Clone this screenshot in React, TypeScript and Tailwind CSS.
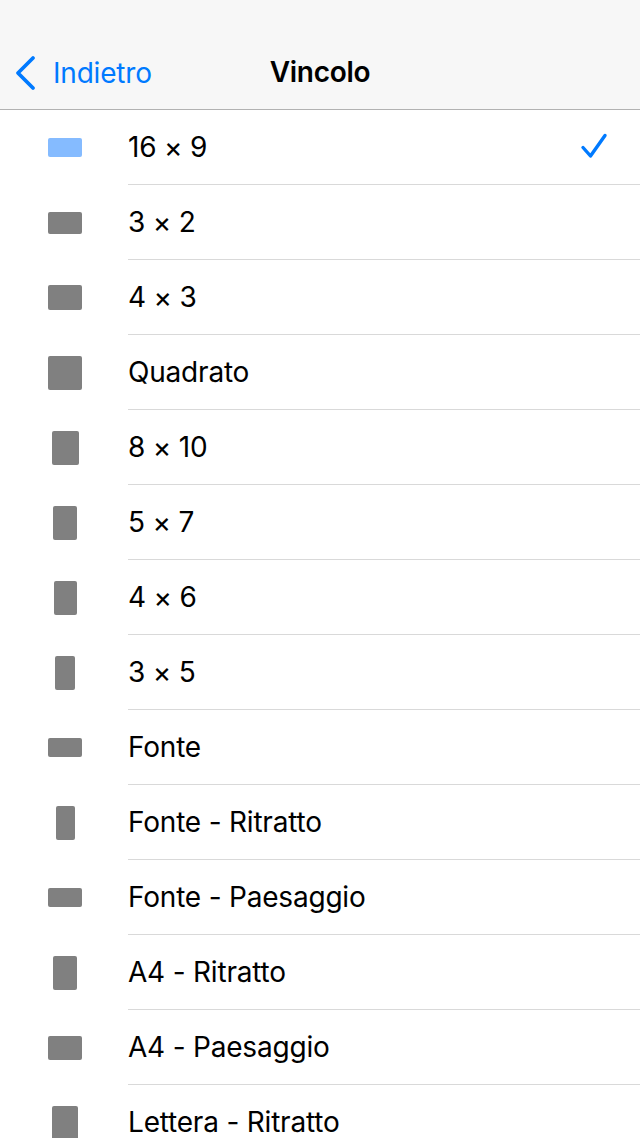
type Ratio = {
  label: string;
  size: string; // full tailwind classes for the shape
  selected?: boolean;
};

const ratios: Ratio[] = [
  { label: "16 × 9", size: "w-[34px] h-[19px]", selected: true },
  { label: "3 × 2", size: "w-[34px] h-[22px]" },
  { label: "4 × 3", size: "w-[34px] h-[25px]" },
  { label: "Quadrato", size: "w-[34px] h-[34px]" },
  { label: "8 × 10", size: "w-[27px] h-[34px]" },
  { label: "5 × 7", size: "w-[24px] h-[34px]" },
  { label: "4 × 6", size: "w-[23px] h-[34px]" },
  { label: "3 × 5", size: "w-[20px] h-[34px]" },
  { label: "Fonte", size: "w-[34px] h-[19px]" },
  { label: "Fonte - Ritratto", size: "w-[19px] h-[34px]" },
  { label: "Fonte - Paesaggio", size: "w-[34px] h-[19px]" },
  { label: "A4 - Ritratto", size: "w-[24px] h-[34px]" },
  { label: "A4 - Paesaggio", size: "w-[34px] h-[24px]" },
  { label: "Lettera - Ritratto", size: "w-[26px] h-[34px]" },
];

function Check() {
  return (
    <svg width="28" height="28" viewBox="0 0 28 28" fill="none">
      <path
        d="M3 14.5 L10.5 23 L25 2.5"
        stroke="#007aff"
        strokeWidth="3.4"
        strokeLinecap="round"
        strokeLinejoin="round"
      />
    </svg>
  );
}

function BackChevron() {
  return (
    <svg width="24" height="36" viewBox="0 0 24 36" fill="none">
      <path
        d="M19 3 L4 18 L19 33"
        stroke="#007aff"
        strokeWidth="3.8"
        strokeLinecap="round"
        strokeLinejoin="round"
      />
    </svg>
  );
}

export default function App() {
  return (
    <div
      className="w-[640px] h-[1138px] overflow-hidden bg-white text-black"
      style={{ fontFamily: "Inter, 'Noto Sans', sans-serif" }}
    >
      {/* Nav bar */}
      <div className="h-[110px] bg-[#f7f7f7] border-b border-[#b2b2b2] pt-[34px]">
        <div className="relative h-[75px] flex items-center">
          <button className="flex items-center gap-[15px] text-[#007aff] pl-[14px] pt-[2px]">
            <BackChevron />
            <span className="text-[28px] tracking-[-0.2px]">Indietro</span>
          </button>
          <h1 className="absolute left-1/2 -translate-x-1/2 text-[28px] font-semibold tracking-[-0.3px]">
            Vincolo
          </h1>
        </div>
      </div>

      {/* List */}
      <div>
        {ratios.map((r) => (
          <div key={r.label} className="flex h-[75px]">
            <div className="w-[128px] pl-[2px] flex items-center justify-center shrink-0">
              <div
                className={`${r.size} rounded-[2px] ${
                  r.selected ? "bg-[#85bbff]" : "bg-[#808080]"
                }`}
              />
            </div>
            <div className="flex-1 flex items-center justify-between border-b border-[#d9d9d9] pr-[32px]">
              <span className="text-[28px] tracking-[-0.2px]">{r.label}</span>
              {r.selected && <Check />}
            </div>
          </div>
        ))}
      </div>
    </div>
  );
}
